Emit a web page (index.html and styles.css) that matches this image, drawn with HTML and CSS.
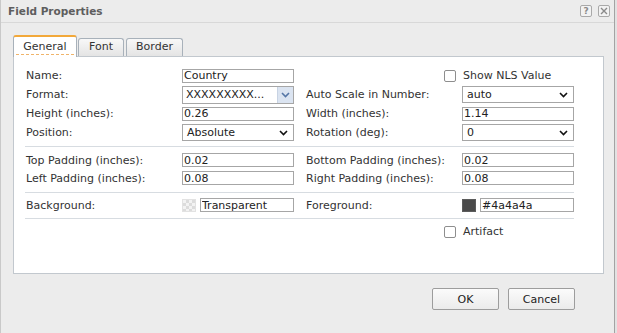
FILE: index.html
```html
<!DOCTYPE html>
<html lang="en">
  <head>
    <meta charset="UTF-8" />
    <title>Field Properties</title>
    <link rel="stylesheet" href="styles.css">
  </head>

  <body>
    <div class="dialog">
      <div class="titlebar">
        <span class="title">Field Properties</span>
        <div class="tools">
          <span class="tool help">?</span>
          <span class="tool">
            <svg width="10" height="10" viewBox="0 0 10 10"><path d="M2 2 L8 8 M8 2 L2 8" stroke="#8a8a8a" stroke-width="1.4" fill="none"/></svg>
          </span>
        </div>
      </div>

      <div class="tabs">
        <div class="tab active"><span class="focus">General</span></div>
        <div class="tab tab-font">Font</div>
        <div class="tab tab-border">Border</div>
      </div>

      <div class="panel">
        <div class="section s1">
          <span class="lbl">Name:</span>
          <input class="txt" type="text" value="Country">
          <span class="check c4"></span>
          <span class="lbl">Show NLS Value</span>

          <span class="lbl">Format:</span>
          <div class="select combo">
            <span>XXXXXXXXX...</span>
            <span class="drop">
              <svg width="9" height="6" viewBox="0 0 9 6"><path d="M1 1 L4.5 4.5 L8 1" stroke="#5576a6" stroke-width="1.6" fill="none"/></svg>
            </span>
          </div>
          <span class="lbl c4">Auto Scale in Number:</span>
          <div class="select">
            <span>auto</span>
            <svg class="chev" width="9" height="6" viewBox="0 0 9 6"><path d="M1 1 L4.5 4.5 L8 1" stroke="#111" stroke-width="1.6" fill="none"/></svg>
          </div>

          <span class="lbl">Height (inches):</span>
          <input class="txt" type="text" value="0.26">
          <span class="lbl c4">Width (inches):</span>
          <input class="txt" type="text" value="1.14">

          <span class="lbl">Position:</span>
          <div class="select">
            <span>Absolute</span>
            <svg class="chev" width="9" height="6" viewBox="0 0 9 6"><path d="M1 1 L4.5 4.5 L8 1" stroke="#111" stroke-width="1.6" fill="none"/></svg>
          </div>
          <span class="lbl c4">Rotation (deg):</span>
          <div class="select">
            <span>0</span>
            <svg class="chev" width="9" height="6" viewBox="0 0 9 6"><path d="M1 1 L4.5 4.5 L8 1" stroke="#111" stroke-width="1.6" fill="none"/></svg>
          </div>
        </div>

        <div class="section s2">
          <span class="lbl">Top Padding (inches):</span>
          <input class="txt" type="text" value="0.02">
          <span class="lbl c4">Bottom Padding (inches):</span>
          <input class="txt" type="text" value="0.02">

          <span class="lbl">Left Padding (inches):</span>
          <input class="txt" type="text" value="0.08">
          <span class="lbl c4">Right Padding (inches):</span>
          <input class="txt" type="text" value="0.08">
        </div>

        <div class="section s3">
          <span class="lbl">Background:</span>
          <div class="color-field">
            <span class="swatch checker"></span>
            <input class="txt" type="text" value="Transparent">
          </div>
          <span class="lbl c4">Foreground:</span>
          <div class="color-field">
            <span class="swatch dark"></span>
            <input class="txt" type="text" value="#4a4a4a">
          </div>
        </div>

        <div class="section s4">
          <span class="check c4"></span>
          <span class="lbl">Artifact</span>
        </div>
      </div>

      <div class="actions">
        <button class="btn">OK</button>
        <button class="btn">Cancel</button>
      </div>
    </div>
  </body>
</html>
```

FILE: styles.css
```css
* {
  margin: 0;
  padding: 0;
  box-sizing: border-box;
}

html,
body {
  width: 617px;
  height: 333px;
  overflow: hidden;
}

body {
  background: #e2e2e2;
  font-family: "DejaVu Sans", Verdana, sans-serif;
  font-size: 11px;
  color: #333;
}

.dialog {
  width: 615px;
  height: 333px;
  background: #ececec;
  border-left: 1px solid #c9c9c9;
  border-right: 1px solid #a3a3a3;
  display: flex;
  flex-direction: column;
}

/* title bar */
.titlebar {
  height: 23px;
  border-bottom: 1px solid #d8d8d8;
  display: flex;
  align-items: center;
  justify-content: space-between;
  padding: 0 4px 0 7px;
}

.title {
  font-weight: bold;
  font-size: 10.5px;
  color: #5e5e5e;
}

.tools {
  display: flex;
  gap: 6px;
}

.tool {
  width: 12px;
  height: 12px;
  border: 1px solid #a9a9a9;
  border-radius: 2px;
  background: #f2f2f2;
  display: flex;
  align-items: center;
  justify-content: center;
}

.tool.help {
  font-size: 9px;
  font-weight: bold;
  color: #8a8a8a;
  line-height: 10px;
}

/* tabs */
.tabs {
  height: 21px;
  margin-top: 12px;
  padding-left: 12px;
  display: flex;
  align-items: flex-end;
}

.tab {
  height: 18px;
  padding-bottom: 2px;
  border: 1px solid #a8b1ba;
  border-bottom: none;
  border-radius: 3px 3px 0 0;
  background: linear-gradient(#f8f8f8, #e4e4e4);
  display: flex;
  align-items: center;
  justify-content: center;
  color: #333;
}

.tab.active {
  width: 64px;
  height: 22px;
  margin-bottom: -1px;
  padding: 3px 0 0;
  align-items: flex-start;
  background: #fff;
  border-top: 2px solid #f2a83a;
  position: relative;
  z-index: 1;
}

.tab .focus {
  line-height: 13px;
  padding: 0 7px 1px;
  border-bottom: 1px dashed #f0b46a;
}

.tab-font {
  width: 46px;
  margin-left: 1px;
}

.tab-border {
  width: 57px;
  margin-left: 2px;
}

/* panel */
.panel {
  height: 218px;
  margin: 0 10px 0 12px;
  padding: 9px 0 0 11px;
  background: #fff;
  border: 1px solid #c2c8ce;
}

.section {
  width: 549px;
  display: grid;
  grid-template-columns: 157px 112px 11px 157px 112px;
}

.section + .section {
  border-top: 1px solid #d7dce1;
}

.s1 {
  grid-auto-rows: 19px;
  padding-bottom: 4px;
}

.s2 {
  grid-auto-rows: 18px;
  padding: 4px 0 5px;
}

.s3 {
  grid-auto-rows: 18px;
  padding: 3px 0 4px;
}

.s4 {
  grid-auto-rows: 19px;
  padding-top: 3px;
}

.c4 {
  grid-column: 4;
}

.lbl {
  align-self: center;
  padding-left: 1px;
  white-space: nowrap;
}

.txt {
  align-self: center;
  width: 100%;
  height: 14px;
  border: 1px solid #a6a6a6;
  padding: 0 1px;
  font: inherit;
  line-height: 12px;
  color: #222;
  background: #fff;
  outline: none;
}

.select {
  align-self: center;
  height: 17px;
  border: 1px solid #a6a6a6;
  padding-left: 4px;
  display: flex;
  align-items: center;
  color: #222;
}

.select .chev {
  margin-left: auto;
  margin-right: 5px;
}

.select.combo {
  height: 18px;
  padding-left: 3px;
}

.select .drop {
  margin-left: auto;
  width: 16px;
  align-self: stretch;
  background: #dbe4f1;
  border-left: 1px solid #c8d3e3;
  display: flex;
  align-items: center;
  justify-content: center;
}

.check {
  justify-self: end;
  align-self: center;
  margin-right: 6px;
  width: 12px;
  height: 12px;
  border: 1px solid #8e8e8e;
  border-radius: 2px;
  background: #fff;
}

.color-field {
  align-self: center;
  display: flex;
  align-items: center;
  gap: 4px;
}

.swatch {
  flex: none;
  width: 14px;
  height: 13px;
}

.swatch.checker {
  background: conic-gradient(#dcdcdc 25%, #f3f3f3 0 50%, #dcdcdc 0 75%, #f3f3f3 0) 0 0 / 6px 6px;
  border: 1px solid #e2e2e2;
}

.swatch.dark {
  background: #4a4a4a;
  border: 1px solid #5c5c5c;
}

/* buttons */
.actions {
  margin-top: 14px;
  padding-right: 39px;
  display: flex;
  justify-content: flex-end;
  gap: 9px;
}

.btn {
  width: 67px;
  height: 22px;
  border: 1px solid #9d9d9d;
  border-radius: 2px;
  background: linear-gradient(#fbfbfb, #ebebeb);
  font: inherit;
  color: #222;
}
```
